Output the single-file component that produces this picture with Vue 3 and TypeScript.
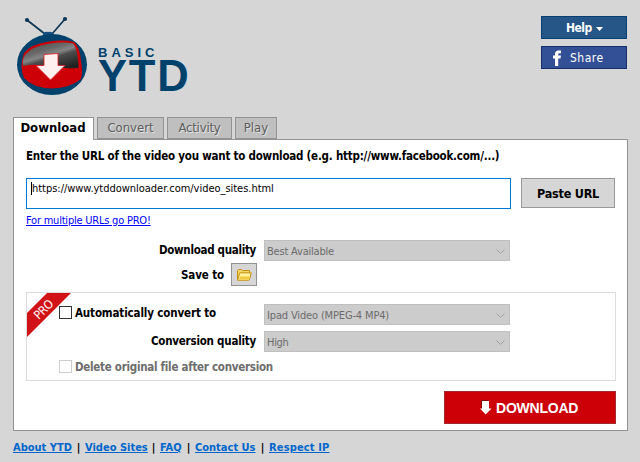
<script setup lang="ts">
import { ref } from 'vue'

interface Tab { name: string; cls: string }
interface FooterLink { text: string; cls: string }

const tabs: Tab[] = [
  { name: 'Download', cls: 't-download' },
  { name: 'Convert', cls: 't-convert' },
  { name: 'Activity', cls: 't-activity' },
  { name: 'Play', cls: 't-play' },
]
const active = ref('Download')
const url = ref('https://www.ytddownloader.com/video_sites.html')

const links: FooterLink[] = [
  { text: 'About YTD', cls: 'l-about' },
  { text: 'Video Sites', cls: 'l-sites' },
  { text: 'FAQ', cls: 'l-faq' },
  { text: 'Contact Us', cls: 'l-contact' },
  { text: 'Respect IP', cls: 'l-respect' },
]
</script>

<template>
  <div class="window">
    <header class="header">
      <div class="brand">
        <svg class="tv" width="72" height="80" viewBox="0 0 72 80">
          <defs>
            <linearGradient id="screen" x1="0.1" y1="0" x2="0.75" y2="1">
              <stop offset="0" stop-color="#4a4a4a" />
              <stop offset="0.35" stop-color="#6a6a6a" />
              <stop offset="0.5" stop-color="#858585" />
              <stop offset="0.62" stop-color="#4c4c4c" />
              <stop offset="1" stop-color="#222" />
            </linearGradient>
          </defs>
          <path d="M11 4L29 18M49 3L36 18" stroke="#0d3655" stroke-width="1.7" fill="none" />
          <circle cx="11" cy="4" r="2.1" fill="#0d3655" />
          <circle cx="49" cy="3" r="2.1" fill="#0d3655" />
          <path d="M27 19Q28 15 32 16Q37 15 38 19Z" fill="#174f83" />
          <ellipse cx="36" cy="48.500" rx="35" ry="30.500" fill="#00426c" />
          <path d="M8 37Q15 28 33 25.500Q48 23.500 58 26Q64 31 65 45Q67 56 65 63Q54 72 36 72.500Q17 72 8 62Q3 50 8 37Z" fill="#cd0007" />
          <path d="M9 39Q16 30 34 27.500Q49 25.500 57 27.500Q62 33 62.500 52Q46 53 34 50.500Q20 47.500 7 50Q6 43 9 39Z" fill="url(#screen)" />
          <path d="M28 38.500L42 37.500V49.500H49L34.500 64L20 49.500H28Z" fill="#fff0f0" stroke="#de1520" stroke-width="0.8" />
        </svg>
        <div class="wordmark">
          <span class="basic">BASIC</span>
          <span class="ytd">YTD</span>
        </div>
      </div>
      <div class="actions">
        <button class="action help">
          <span>Help</span>
          <svg width="7" height="4" viewBox="0 0 7 4"><path d="M0 0H7L3.500 4Z" fill="#fff" /></svg>
        </button>
        <button class="action share">
          <svg width="9" height="16" viewBox="0 0 9 16">
            <path d="M2 16V8.500H0V5.500H2V4Q2 0.500 5.500 0.500H8V3.200H6.500Q5.200 3.200 5.200 4.500V5.500H8L7.500 8.500H5.200V16Z" fill="#fff" />
          </svg>
          <span>Share</span>
        </button>
      </div>
    </header>

    <nav class="tabs">
      <button
        v-for="tab in tabs"
        :key="tab.name"
        class="tab"
        :class="[tab.cls, { active: tab.name === active }]"
        @click="active = tab.name"
      >{{ tab.name }}</button>
    </nav>

    <main class="panel">
      <div class="title">Enter the URL of the video you want to download (e.g. http://www.facebook.com/...)</div>
      <div class="url-row">
        <div class="url-box"><i class="caret"></i><span>{{ url }}</span></div>
        <button class="paste">Paste URL</button>
      </div>
      <a class="pro-link">For multiple URLs go PRO!</a>

      <div class="row quality-row">
        <span class="label q-label">Download quality</span>
        <div class="select"><span class="s-best">Best Available</span>
          <svg width="9" height="5" viewBox="0 0 9 5"><path d="M0.500 0.500L4.500 4.500L8.500 0.500" /></svg>
        </div>
      </div>
      <div class="row save-row">
        <span class="label save-label">Save to</span>
        <button class="folder">
          <svg width="16" height="13" viewBox="0 0 16 13">
            <path d="M1.500 11.500V2.500L2.500 1.500H5.500L6.500 2.500H13.500V5" fill="#f5d668" stroke="#c59010" />
            <path d="M1.500 12.200L3.800 4.800H15.300L13.500 11.500Q13.300 12.300 12.500 12.300Z" fill="#fff3a0" stroke="#c59010" />
            <path d="M3 11.500L4 8.500H13.800L13 11.500Z" fill="#f3cb43" />
          </svg>
        </button>
      </div>

      <section class="pro-box">
        <div class="ribbon">
          <svg width="44" height="44" viewBox="0 0 44 44">
            <path d="M0 20L20 0H44L0 44Z" fill="#d11216" />
            <text x="16.500" y="16.500" transform="rotate(-45 16.500 16.500)" text-anchor="middle" dy="4.200" class="ribbon-text">PRO</text>
          </svg>
        </div>
        <div class="row convert-row">
          <i class="check"></i>
          <span class="label auto-label">Automatically convert to</span>
          <div class="select"><span class="s-ipad">Ipad Video (MPEG-4 MP4)</span>
            <svg width="9" height="5" viewBox="0 0 9 5"><path d="M0.500 0.500L4.500 4.500L8.500 0.500" /></svg>
          </div>
        </div>
        <div class="row conv-quality-row">
          <span class="label c-label">Conversion quality</span>
          <div class="select"><span class="s-high">High</span>
            <svg width="9" height="5" viewBox="0 0 9 5"><path d="M0.500 0.500L4.500 4.500L8.500 0.500" /></svg>
          </div>
        </div>
        <div class="row delete-row">
          <i class="check off"></i>
          <span class="label delete-label">Delete original file after conversion</span>
        </div>
      </section>

      <button class="download">
        <svg width="12" height="15" viewBox="0 0 12 15">
          <path d="M1.500 8V0.500H8.500" stroke="#870004" fill="none" />
          <path d="M2 1H9V8.500H11.500L5.700 14.500L0 8.500H2Z" fill="#fff" />
        </svg>
        <span>DOWNLOAD</span>
      </button>
    </main>

    <footer class="footer">
      <template v-for="(link, i) in links" :key="link.text">
        <i v-if="i > 0" class="sep">|</i>
        <a :class="link.cls">{{ link.text }}</a>
      </template>
    </footer>
  </div>
</template>

<style>
body { background: #d6d6d6; overflow: hidden; }
</style>

<style scoped>
.window, .window * { box-sizing: border-box; }
.window {
  width: 640px; height: 462px; padding: 0 11px 0 13px;
  background: #d6d6d6; color: #000;
  font: 11px "DejaVu Sans Condensed", "DejaVu Sans", sans-serif;
  white-space: nowrap;
}
button { font: inherit; color: inherit; padding: 0; margin: 0; border-radius: 0; }
.header { height: 117px; display: flex; justify-content: space-between; align-items: flex-start; }
.brand { display: flex; padding: 16px 0 0 3px; }
.tv { display: block; }
.wordmark {
  display: flex; flex-direction: column; padding: 30px 0 0 10px;
  font-family: "Liberation Sans", sans-serif; font-weight: bold; color: #00426c;
}
.basic { font-size: 13px; line-height: 14px; letter-spacing: 4px; }
.ytd { font-size: 43.500px; line-height: 32px; letter-spacing: 1.800px; }

.actions { display: flex; flex-direction: column; gap: 7px; padding: 16px 2px 0 0; }
.action { width: 86px; height: 23px; display: flex; align-items: center; color: #fff; }
.help { background: #265687; border: 1px solid #073e73; font-size: 12px; font-weight: bold; padding-left: 24px; gap: 4px; letter-spacing: -0.500px; }
.help svg { margin-top: 3px; }
.share { background: #334f96; border: 1px solid #122f6c; font-size: 12px; padding-left: 11px; gap: 8px; letter-spacing: 0.500px; }

.tabs { display: flex; height: 22px; align-items: flex-start; }
.tab {
  height: 22px; margin-right: 3px; padding-bottom: 2px; background: #bfbfbf; border: 1px solid #929292;
  color: #5c5c5c; font-size: 13px; text-shadow: 1px 1px 0 #e2e2e2;
}
.tab.active {
  position: relative; height: 23px; background: #fff; border-bottom: 0;
  color: #000; font-weight: bold; text-shadow: none; padding: 0 1px 3px 0;
}
.t-download { width: 81px; }
.t-convert { width: 67px; }
.t-activity { width: 65px; letter-spacing: -0.200px; }
.t-play { width: 42px; }

.panel { width: 615px; height: 292px; background: #fff; border: 1px solid #929292; padding: 9px 11px 0 12px; display: flex; flex-direction: column; }
.title { height: 15px; line-height: 15px; font-size: 11.500px; font-weight: bold; letter-spacing: -0.220px; }
.url-row { display: flex; gap: 10px; margin-top: 14px; }
.url-box { width: 485px; height: 31px; border: 1px solid #0078d7; padding: 2px 0 0 4px; line-height: 15px; display: flex; letter-spacing: -0.030px; }
.caret { width: 1px; height: 13px; background: #000; margin-top: 1px; }
.paste { width: 94px; height: 30px; background: #d6d6d6; border: 1px solid #999; font-size: 12.500px; font-weight: bold; letter-spacing: -0.220px; }
.pro-link { height: 15px; line-height: 15px; margin-top: 4px; color: #00f; text-decoration: underline; letter-spacing: -0.220px; align-self: flex-start; }

.row { display: flex; align-items: flex-start; }
.label { font-size: 11.500px; line-height: 15px; font-weight: bold; text-align: right; }
.select {
  width: 246px; height: 21px; margin-left: 8px; padding: 1px 4px 0 2px;
  background: #ccc; border: 1px solid #bfbfbf; color: #6b6b6b;
  display: flex; align-items: center; justify-content: space-between;
}
.select svg { fill: none; stroke: #a0a0a0; }
.quality-row { margin-top: 12px; }
.q-label { width: 230px; padding-top: 3px; letter-spacing: -0.300px; }
.save-row { margin-top: 2px; }
.save-label { width: 198px; padding-top: 5px; letter-spacing: -0.120px; }
.folder { width: 26px; height: 23px; margin-left: 7px; padding-right: 1px; background: #d6d6d6; border: 1px solid #929292; display: grid; place-items: center; }

.pro-box { position: relative; width: 590px; height: 89px; margin-top: 6px; border: 1px solid #dcdcdc; padding: 11px 0 0; }
.ribbon { position: absolute; left: 0; top: 0; }
.ribbon svg { display: block; }
.ribbon-text { font-size: 12px; fill: #fff; letter-spacing: -0.300px; }
.check { position: relative; width: 13px; height: 13px; border: 1px solid #333; background: #fff; margin-left: 32px; flex: none; }
.check.off { border-color: #ccc; }
.convert-row .check { margin-top: 2px; }
.auto-label { width: 181px; margin-left: 3px; padding-top: 2px; text-align: left; letter-spacing: -0.140px; }
.conv-quality-row { margin-top: 6px; }
.c-label { width: 229px; padding-top: 3px; letter-spacing: -0.230px; }
.delete-row { margin-top: 8px; }
.delete-label { margin-left: 3px; color: #6d6d6d; letter-spacing: -0.270px; }
.s-best { letter-spacing: -0.200px; }
.s-ipad { letter-spacing: -0.150px; }
.s-high { letter-spacing: -0.300px; }

.download {
  align-self: flex-end; width: 172px; height: 33px; margin-top: 10px;
  background: #cd0007; border: 1px solid #a02a2e; color: #fff;
  display: flex; align-items: center; padding-left: 35px; gap: 4px;
  font: bold 14px "Liberation Sans", sans-serif; letter-spacing: -0.220px;
}
.footer { display: flex; align-items: baseline; margin-top: 9px; font-weight: bold; line-height: 15px; }
.footer a { color: #0066cc; text-decoration: underline; }
.sep { width: 13px; text-align: center; font-style: normal; }
.l-about { width: 59px; }
.l-sites { width: 62px; }
.l-faq { width: 22px; }
.l-contact { width: 61px; }
.l-respect { width: 61px; letter-spacing: 0.150px; }
</style>
